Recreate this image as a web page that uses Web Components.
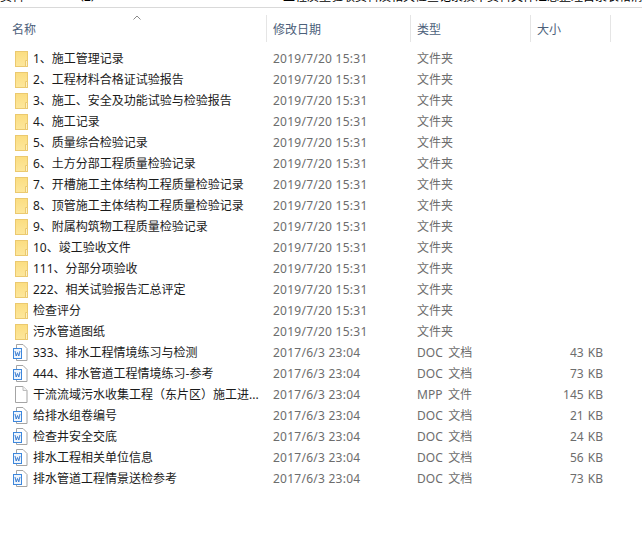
<!DOCTYPE html>
<html>
<head>
<meta charset="utf-8">
<style>
  html, body { margin: 0; background: #fff; }
  body { width: 642px; height: 538px; overflow: hidden; }
</style>
</head>
<body>
<file-window id="win"></file-window>
<script>
const FONT = '"Noto Sans", "Noto Sans CJK SC", sans-serif';

class CutStrip extends HTMLElement {
  constructor () {
    super();
    this.attachShadow({ mode: 'open' }).innerHTML = `
      <style>
        :host { display: block; height: 8px; box-sizing: border-box; overflow: hidden; border-bottom: 1px solid #d9d9d9; }
        div { display: flex; margin-top: -10px; font: 12px/14px ${FONT}; color: #000; white-space: pre; }
        .a { width: 72px; flex: none; }
        .b { width: 211px; flex: none; }
      </style>
      <div><span class="a">资料</span><span class="b">（2）</span><span>工程质量验收资料及相关检查记录技术资料文件汇总整理目录表格清单</span></div>`;
  }
}

class HeadCell extends HTMLElement {
  constructor () {
    super();
    this.attachShadow({ mode: 'open' }).innerHTML = `
      <style>
        :host { display: flex; align-items: center; height: 27px; padding-left: 6px; box-sizing: border-box;
          border-right: 1px solid #e5e5e5; font: 12px/16px "Noto Sans CJK SC", sans-serif; color: #4c607a; }
      </style>
      <slot></slot>`;
  }
}

class HeadRow extends HTMLElement {
  constructor () {
    super();
    this.attachShadow({ mode: 'open' }).innerHTML = `
      <style>
        :host { display: grid; grid-template-columns: 267px 144px 120px 80px; position: relative;
          height: 27px; margin-top: 7px; }
        ::slotted(:first-child) { padding-left: 12px; }
        svg { position: absolute; left: 133px; top: 0; }
      </style>
      <slot></slot>
      <svg width="8" height="5" viewBox="0 0 8 5" fill="none" stroke="#8a8a8a" stroke-width="1"><path d="M.5 4.5 L4 1 L7.5 4.5"/></svg>`;
  }
}

class FileIcon extends HTMLElement {
  static get observedAttributes () { return ['kind']; }
  attributeChangedCallback () { this.render(); }
  constructor () {
    super();
    this.attachShadow({ mode: 'open' });
    this.render();
  }
  render () {
    const kind = this.getAttribute('kind') || 'dir';
    const icons = {
      dir: `<svg width="13" height="16" viewBox="0 0 13 16" style="margin-left:-1px">
        <defs><linearGradient id="f" x1="0" y1="0" x2="0" y2="1"><stop offset="0" stop-color="#fbdd80"/><stop offset="1" stop-color="#fde79c"/></linearGradient></defs>
        <rect x=".5" y=".5" width="12" height="15" fill="url(#f)" stroke="#ebc96f"/>
        <path d="M10.5 9.5H12.5V15.5H10.5Z" fill="#fdf1c4" stroke="#ebc96f"/></svg>`,
      doc: `<svg width="15" height="17" viewBox="0 0 15 17" style="margin-left:-3px">
        <path d="M3.5 .5H10L14 4.5V16.5H3.5Z" fill="#fff" stroke="#a4a4a4"/>
        <rect x=".5" y="4.5" width="8" height="10" fill="#eef5fd" stroke="#3d87dc"/>
        <path d="M2 7L3.2 12L4.5 8.5L5.8 12L7 7" fill="none" stroke="#2f74cc" stroke-width=".9"/></svg>`,
      mpp: `<svg width="13" height="17" viewBox="0 0 13 17" style="margin-left:-1px">
        <path d="M.5 .5H8L12 4.5V16.5H.5Z" fill="#fff" stroke="#a4a4a4"/>
        <path d="M8 .5V4.5H12" fill="#f3f3f3" stroke="#bdbdbd"/></svg>`
    };
    this.shadowRoot.innerHTML = `
      <style>
        :host { display: flex; width: 17px; flex: none; align-items: center; }
        svg { display: block; flex: none; }
      </style>
      ${icons[kind]}`;
  }
}

class FileRow extends HTMLElement {
  constructor () {
    super();
    this.attachShadow({ mode: 'open' }).innerHTML = `
      <style>
        :host { display: grid; grid-template-columns: 273px 144px 120px 66px; height: 21px; align-items: center;
          font: 12px/21px ${FONT}; color: #6d6d6d; white-space: nowrap; }
        .name { display: flex; align-items: center; padding-left: 16px; color: #1a1a1a; overflow: hidden; }
        .date { letter-spacing: .25px; }
        .type { word-spacing: 2.5px; }
        .size { text-align: right; word-spacing: 1px; }
      </style>
      <div class="name"><file-icon></file-icon><slot></slot></div>
      <div class="date"></div><div class="type"></div><div class="size"></div>`;
    const r = this.shadowRoot;
    r.querySelector('file-icon').setAttribute('kind', this.getAttribute('kind') || 'dir');
    r.querySelector('.date').textContent = this.getAttribute('date');
    r.querySelector('.type').textContent = this.getAttribute('type');
    r.querySelector('.size').textContent = this.getAttribute('size') || '';
  }
}

class FileWindow extends HTMLElement {
  constructor () {
    super();
    const dir = '2019/7/20 15:31', doc = '2017/6/3 23:04';
    const rows = [
      ['dir', '1、施工管理记录', dir, '文件夹', ''],
      ['dir', '2、工程材料合格证试验报告', dir, '文件夹', ''],
      ['dir', '3、施工、安全及功能试验与检验报告', dir, '文件夹', ''],
      ['dir', '4、施工记录', dir, '文件夹', ''],
      ['dir', '5、质量综合检验记录', dir, '文件夹', ''],
      ['dir', '6、土方分部工程质量检验记录', dir, '文件夹', ''],
      ['dir', '7、开槽施工主体结构工程质量检验记录', dir, '文件夹', ''],
      ['dir', '8、顶管施工主体结构工程质量检验记录', dir, '文件夹', ''],
      ['dir', '9、附属构筑物工程质量检验记录', dir, '文件夹', ''],
      ['dir', '10、竣工验收文件', dir, '文件夹', ''],
      ['dir', '111、分部分项验收', dir, '文件夹', ''],
      ['dir', '222、相关试验报告汇总评定', dir, '文件夹', ''],
      ['dir', '检查评分', dir, '文件夹', ''],
      ['dir', '污水管道图纸', dir, '文件夹', ''],
      ['doc', '333、排水工程情境练习与检测', doc, 'DOC 文档', '43 KB'],
      ['doc', '444、排水管道工程情境练习-参考', doc, 'DOC 文档', '73 KB'],
      ['mpp', '干流流域污水收集工程（东片区）施工进...', doc, 'MPP 文件', '145 KB'],
      ['doc', '给排水组卷编号', doc, 'DOC 文档', '21 KB'],
      ['doc', '检查井安全交底', doc, 'DOC 文档', '24 KB'],
      ['doc', '排水工程相关单位信息', doc, 'DOC 文档', '56 KB'],
      ['doc', '排水管道工程情景送检参考', doc, 'DOC 文档', '73 KB']
    ];
    const body = rows.map(([k, n, d, t, s]) =>
      `<file-row kind="${k}" date="${d}" type="${t}" size="${s}">${n}</file-row>`).join('');
    this.attachShadow({ mode: 'open' }).innerHTML = `
      <style>
        :host { display: block; width: 642px; height: 538px; overflow: hidden; background: #fff; }
        .list { padding-top: 6px; }
      </style>
      <cut-strip></cut-strip>
      <head-row><head-cell>名称</head-cell><head-cell>修改日期</head-cell><head-cell>类型</head-cell><head-cell>大小</head-cell></head-row>
      <div class="list">${body}</div>`;
  }
}

customElements.define('cut-strip', CutStrip);
customElements.define('head-cell', HeadCell);
customElements.define('head-row', HeadRow);
customElements.define('file-icon', FileIcon);
customElements.define('file-row', FileRow);
customElements.define('file-window', FileWindow);
</script>
</body>
</html>
